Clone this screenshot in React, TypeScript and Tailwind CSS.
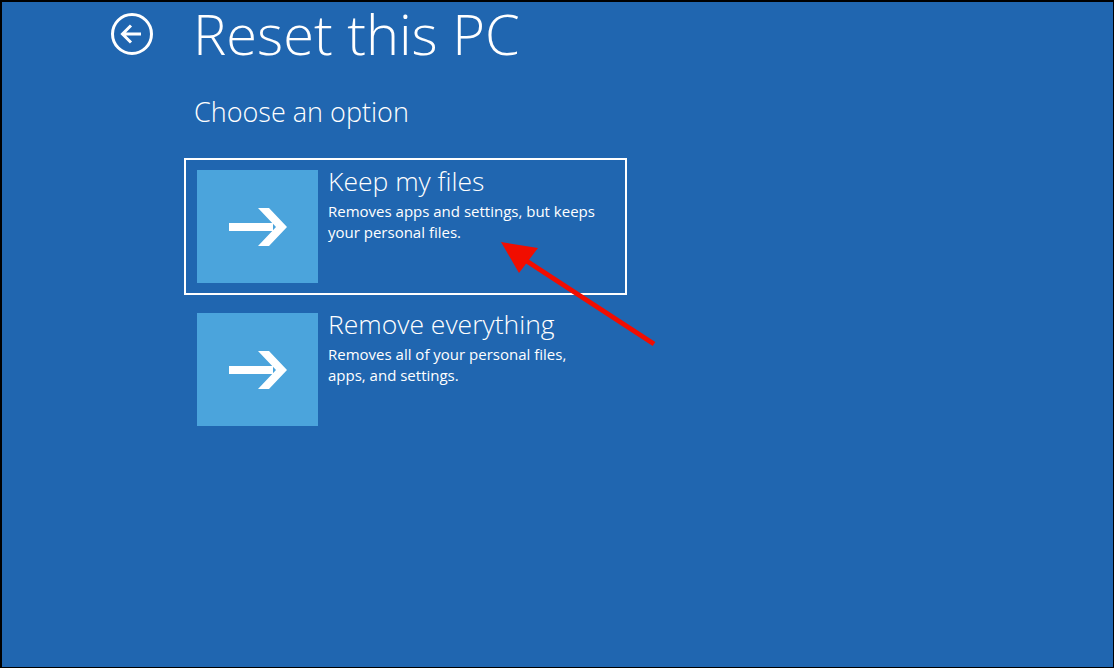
import React from "react";

const font = { fontFamily: '"Open Sans", "Noto Sans", sans-serif' };

function Tile() {
  return (
    <div className="flex h-[113px] w-[121px] shrink-0 items-center justify-center bg-[#4ba4dc]">
      <svg width="60" height="38" viewBox="0 0 60 38" className="ml-[2px]">
        <rect x="0" y="15" width="44" height="8" fill="#fff" />
        <path d="M29 0 L40 0 L58 19 L40 38 L29 38 L47 19 Z" fill="#fff" />
      </svg>
    </div>
  );
}

function Option({
  title,
  lines,
  selected,
}: {
  title: string;
  lines: string[];
  selected?: boolean;
}) {
  return (
    <div
      className={`flex h-[137px] w-[443px] gap-[10px] border-2 px-[11px] pt-[10px] ${
        selected ? "border-white" : "border-transparent"
      }`}
    >
      <Tile />
      <div className="flex flex-col text-white">
        <div className="-mt-[5px] text-[26.5px] font-light leading-[32px]">{title}</div>
        <div className="mt-[4px] text-[15px] leading-[21px]">
          {lines.map((l) => (
            <div key={l}>{l}</div>
          ))}
        </div>
      </div>
    </div>
  );
}

export default function App() {
  return (
    <div
      style={font}
      className="relative h-[668px] w-[1114px] overflow-hidden border-t-2 border-l-2 border-r border-b border-black bg-[#2066b0] text-white"
    >
      <div className="flex items-start pl-[107px]">
        <svg width="46" height="46" viewBox="0 0 46 46" className="mt-[9px] shrink-0">
          <circle cx="23" cy="23" r="19.5" fill="none" stroke="#fff" strokeWidth="3" />
          <path
            d="M32 23 H14 M22 14.5 L13.5 23 L22 31.5"
            fill="none"
            stroke="#fff"
            strokeWidth="3"
            strokeLinejoin="miter"
          />
        </svg>
        <h1 className="-mt-[7px] ml-[38px] text-[56px] font-light leading-[76px]">
          Reset this PC
        </h1>
      </div>
      <div className="pl-[192px]">
        <p className="mt-[24px] text-[27px] font-light leading-[34px]">
          Choose an option
        </p>
        <div className="mt-[29px] -ml-[10px] flex flex-col gap-[6px]">
          <Option
            selected
            title="Keep my files"
            lines={["Removes apps and settings, but keeps", "your personal files."]}
          />
          <Option
            title="Remove everything"
            lines={["Removes all of your personal files,", "apps, and settings."]}
          />
        </div>
      </div>
      <svg
        className="absolute left-0 top-0"
        width="1114"
        height="668"
        viewBox="0 0 1114 668"
      >
        <line x1="652" y1="342" x2="520" y2="256" stroke="#f10d00" strokeWidth="5" />
        <path d="M499 240 L536 246 L517 271 Z" fill="#f10d00" />
      </svg>
    </div>
  );
}
